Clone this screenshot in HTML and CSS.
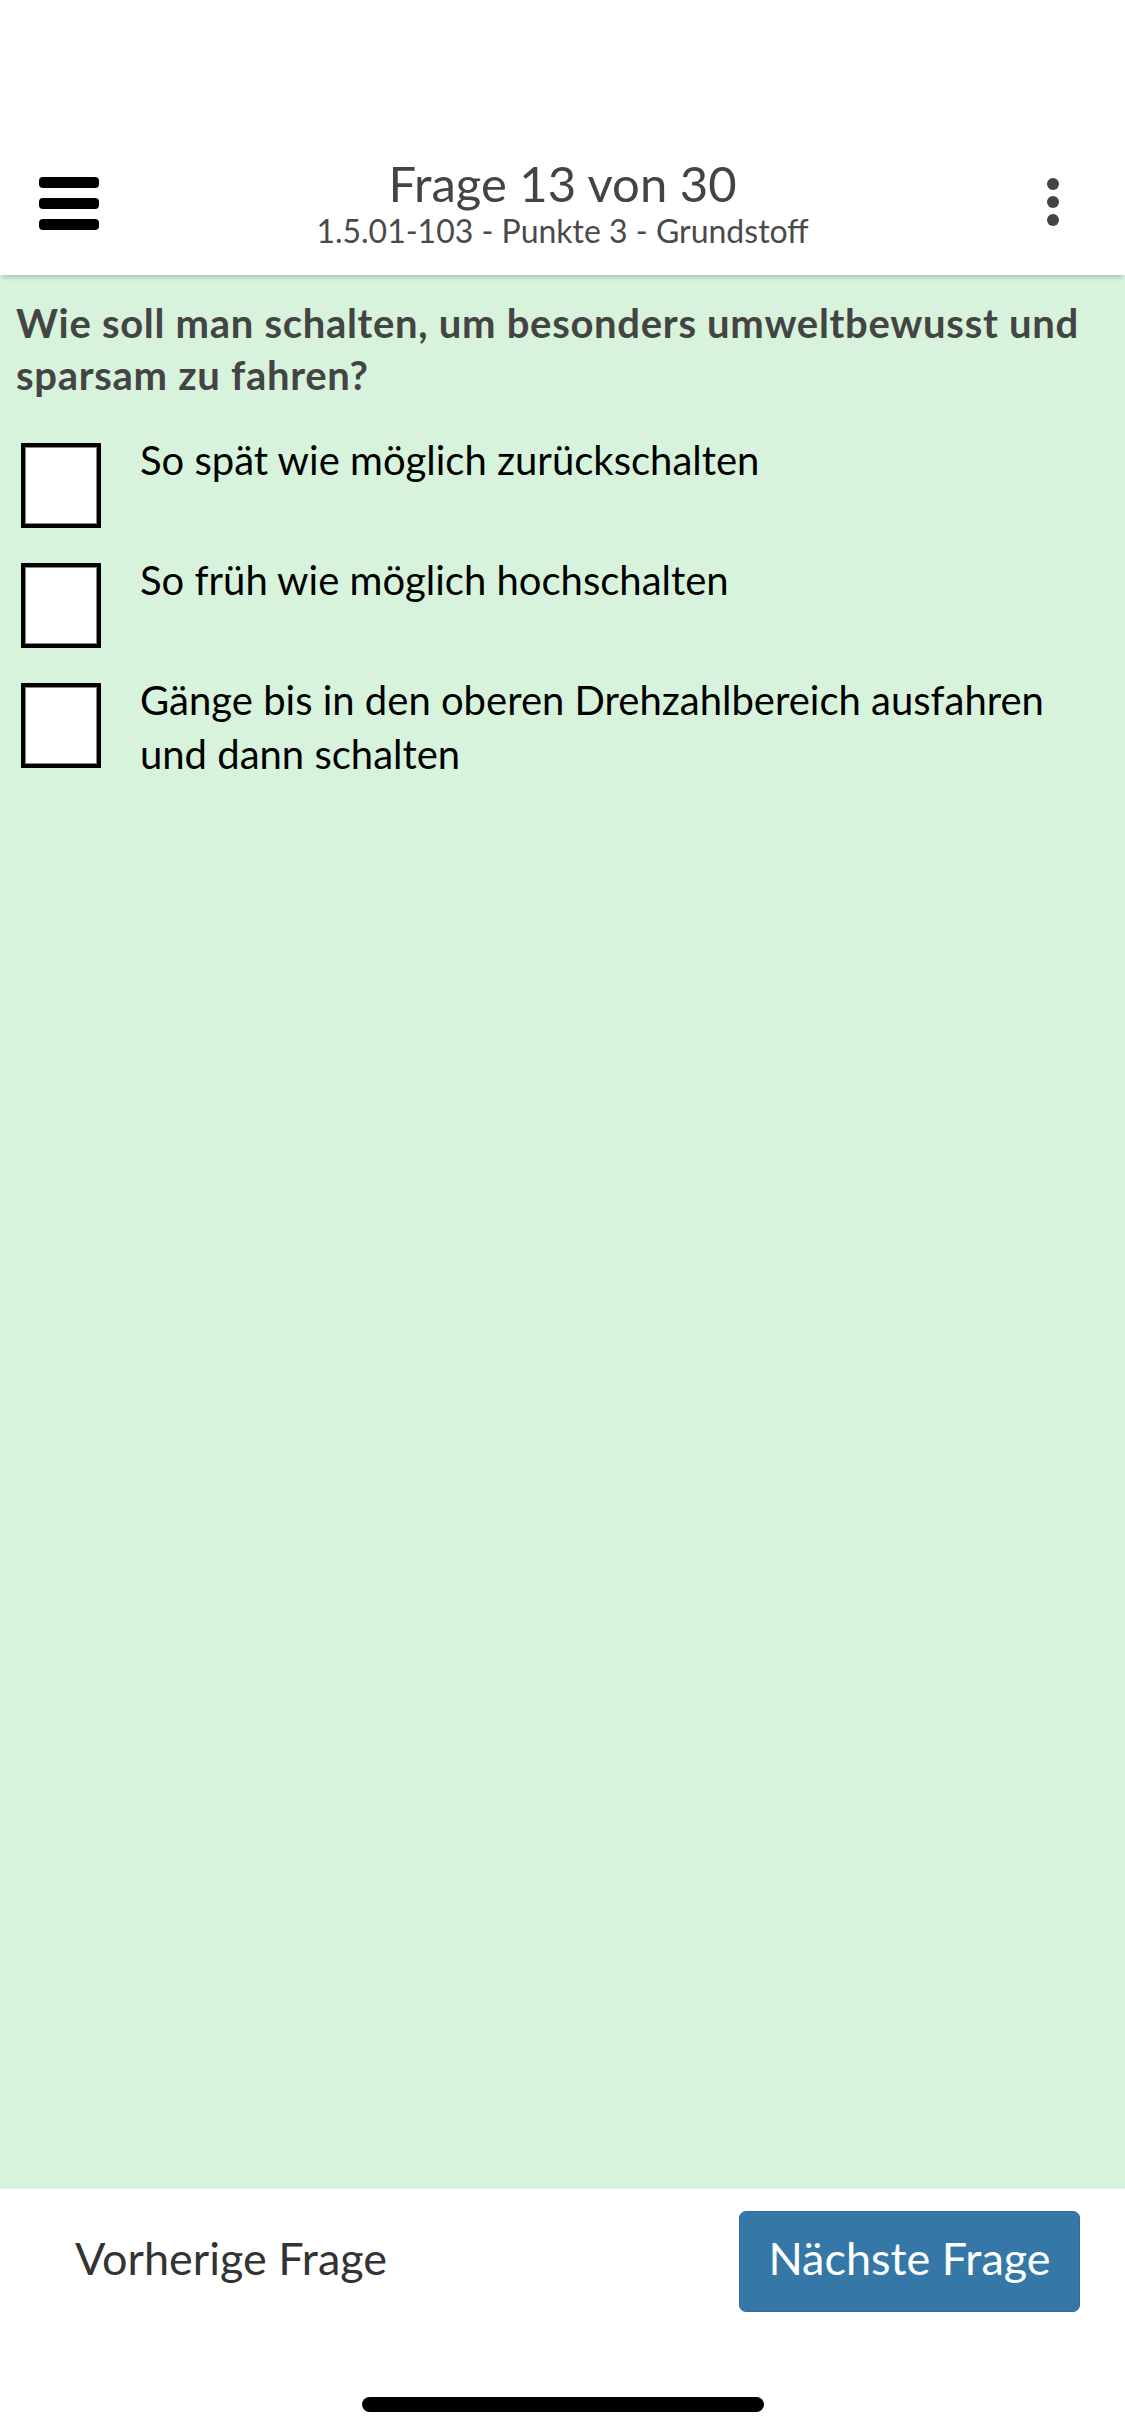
FILE: index.html
```html
<!DOCTYPE html>
<html lang="de">
<head>
<meta charset="utf-8">
<title>Frage 13 von 30</title>
<link rel="stylesheet" href="styles.css">
</head>
<body>
<div class="app">
  <div class="status-bar"></div>
  <header class="topbar">
    <button class="icon-btn menu-btn" aria-label="Menü">
      <span class="bar"></span><span class="bar"></span><span class="bar"></span>
    </button>
    <div class="title-block">
      <div class="title">Frage 13 von 30</div>
      <div class="subtitle">1.5.01-103 - Punkte 3 - Grundstoff</div>
    </div>
    <button class="icon-btn more-btn" aria-label="Mehr">
      <span class="dot"></span><span class="dot"></span><span class="dot"></span>
    </button>
  </header>
  <main class="content">
    <h1 class="question">Wie soll man schalten, um besonders umweltbewusst und sparsam zu fahren?</h1>
    <ul class="answers">
      <li class="answer"><span class="box"></span><span class="answer-text">So spät wie möglich zurückschalten</span></li>
      <li class="answer"><span class="box"></span><span class="answer-text">So früh wie möglich hochschalten</span></li>
      <li class="answer"><span class="box"></span><span class="answer-text">Gänge bis in den oberen Drehzahlbereich ausfahren und dann schalten</span></li>
    </ul>
  </main>
  <footer class="footer">
    <button class="prev-btn">Vorherige Frage</button>
    <button class="next-btn">Nächste Frage</button>
  </footer>
  <div class="home-area"><span class="home-indicator"></span></div>
</div>
</body>
</html>
```

FILE: styles.css
```css
* { box-sizing: border-box; }
html, body { margin: 0; padding: 0; }
body {
  width: 1125px;
  height: 2436px;
  font-family: Lato, "Noto Sans", sans-serif;
  background: #fff;
  overflow: hidden;
}
.app {
  display: flex;
  flex-direction: column;
  height: 2436px;
}
.status-bar {
  height: 132px;
  flex: none;
  background: #fff;
}
.topbar {
  height: 143px;
  flex: none;
  display: grid;
  grid-template-columns: 1fr auto 1fr;
  align-items: center;
  background: #fff;
  padding: 0 39px;
  position: relative;
  z-index: 2;
  box-shadow: 0 4px 5px -2px rgba(0, 0, 0, 0.22);
}
.icon-btn {
  border: 0;
  background: none;
  padding: 0;
  display: flex;
  flex-direction: column;
}
.menu-btn {
  justify-self: start;
  width: 60px;
  gap: 10px;
}
.bar {
  display: block;
  height: 11px;
  width: 60px;
  border-radius: 4px;
  background: #000;
}
.more-btn {
  justify-self: end;
  width: 12px;
  gap: 6px;
  margin: -3px 27px 0 0;
}
.dot {
  display: block;
  width: 12px;
  height: 12px;
  border-radius: 50%;
  background: #444;
}
.title-block {
  display: flex;
  flex-direction: column;
  align-items: center;
  color: #444;
}
.title {
  font-size: 49px;
  line-height: 55px;
}
.subtitle {
  font-size: 32px;
  line-height: 40px;
  color: #4a4a4a;
}
.content {
  flex: 1;
  background: #d8f3dc;
  padding: 22px 16px 0 16px;
}
.question {
  margin: 0;
  font-size: 40px;
  line-height: 52px;
  letter-spacing: 0.7px;
  font-weight: 700;
  color: #444;
}
.answers {
  list-style: none;
  margin: 32px 0 0 0;
  padding: 0 20px 0 5px;
  display: flex;
  flex-direction: column;
  gap: 25px;
}
.answer {
  display: flex;
  align-items: flex-start;
  gap: 39px;
}
.box {
  flex: none;
  width: 80px;
  height: 85px;
  margin-top: 10px;
  background: #fff;
  border: 4px solid #000;
  box-shadow: inset 0 0 0 1px #888;
}
.answer-text {
  font-size: 40px;
  line-height: 54px;
  color: #000;
}
.footer {
  height: 145px;
  flex: none;
  display: flex;
  align-items: center;
  justify-content: space-between;
  padding: 0 45px 0 75px;
  background: #fff;
}
.prev-btn {
  border: 0;
  background: none;
  padding: 0 0 8px 0;
  font-family: inherit;
  font-size: 45px;
  color: #333;
}
.next-btn {
  width: 341px;
  height: 101px;
  border: 1px solid #2e6c9c;
  border-radius: 7px;
  background: #3578a8;
  color: #fff;
  font-family: inherit;
  font-size: 45px;
  padding: 0 0 8px 0;
}
.home-area {
  height: 102px;
  flex: none;
  background: #fff;
  display: flex;
  justify-content: center;
  padding-top: 63px;
}
.home-indicator {
  display: block;
  width: 402px;
  height: 15px;
  border-radius: 8px;
  background: #000;
}
```
